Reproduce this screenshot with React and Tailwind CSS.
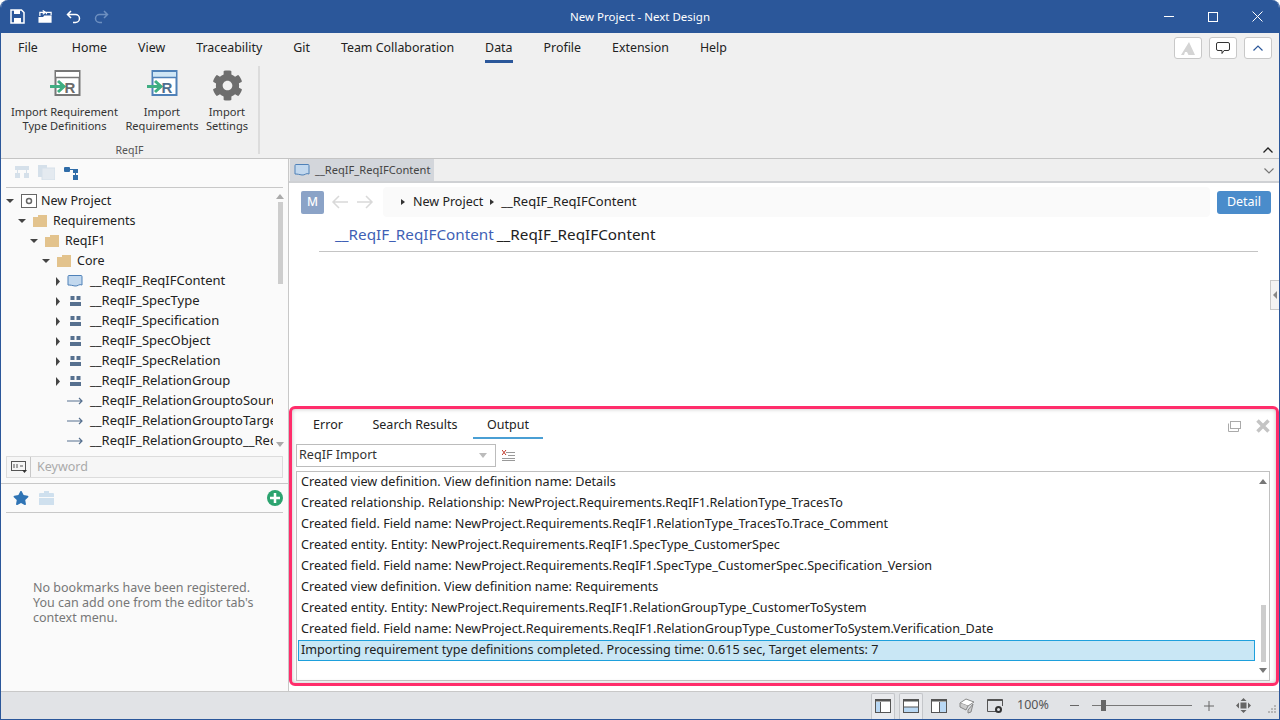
import React from "react";
import { FaCog, FaStar } from "react-icons/fa";

const ImportIcon = ({ blue }) => (
  <svg width="32" height="30" viewBox="0 0 32 30" fill="none">
    <rect x="6.500" y="1" width="24" height="24" fill="#fff" stroke={blue ? "#4f81b8" : "#777"} strokeWidth="2" />
    <rect x="7" y="2" width="23" height="5.500" fill={blue ? "#cfe6f5" : "#fff"} />
    <path d="M6 7.500h25" stroke={blue ? "#4f81b8" : "#777"} strokeWidth="1.500" />
    <text x="15.500" y="22.500" fontSize="15" fontWeight="700" fill={blue ? "#4f6f8f" : "#6b6b6b"} fontFamily="Liberation Sans, sans-serif">R</text>
    <path d="M1 16.500h12M9 11l6 5.500-6 5.500" stroke="#3fae82" strokeWidth="3" />
  </svg>
);

const Arrow = ({ open }) =>
  open ? (
    <svg width="8" height="6" viewBox="0 0 8 6"><path d="M0 1h8L4 5z" fill="#444" /></svg>
  ) : (
    <svg width="6" height="9" viewBox="0 0 6 9"><path d="M1 0l4 4.500L1 9z" fill="#444" /></svg>
  );

const Folder = () => (
  <svg width="14" height="12" viewBox="0 0 14 12"><path d="M0 2h5V0h9v12H0z" fill="#e3c38d" /></svg>
);
const Doc = () => (
  <svg width="16" height="12" viewBox="0 0 16 12" className="shrink-0"><path d="M1 1.500a1 1 0 011-1h12a1 1 0 011 1v8.500c-3-1.500-4 1.500-7 1-3-.5-4-1-7-1z" fill="#c2d8ee" stroke="#4f81b8" strokeWidth="1" /></svg>
);
const Entity = () => (
  <svg width="11" height="11" viewBox="0 0 11 11" fill="#56708f" className="ml-[3px]"><rect x="0.500" y="0" width="4" height="4" /><rect x="6.500" y="0" width="4" height="4" /><rect x="0" y="6" width="11" height="4" /></svg>
);
const Rel = () => (
  <svg width="16" height="8" viewBox="0 0 16 8" fill="none"><path d="M0 4h15M12 1l3 3-3 3" stroke="#56708f" strokeWidth="1.200" /></svg>
);
const Proj = () => (
  <svg width="16" height="14" viewBox="0 0 16 14" fill="none"><rect x="0.500" y="0.500" width="15" height="13" fill="#fff" stroke="#666" /><circle cx="8" cy="7" r="2.500" stroke="#666" strokeWidth="1.500" /></svg>
);

const treeRows = [
  { d: 0, t: "New Project", a: "open", i: <Proj /> },
  { d: 1, t: "Requirements", a: "open", i: <Folder /> },
  { d: 2, t: "ReqIF1", a: "open", i: <Folder /> },
  { d: 3, t: "Core", a: "open", i: <Folder /> },
  { d: 4, t: "__ReqIF_ReqIFContent", a: "closed", i: <Doc /> },
  { d: 4, t: "__ReqIF_SpecType", a: "closed", i: <Entity /> },
  { d: 4, t: "__ReqIF_Specification", a: "closed", i: <Entity /> },
  { d: 4, t: "__ReqIF_SpecObject", a: "closed", i: <Entity /> },
  { d: 4, t: "__ReqIF_SpecRelation", a: "closed", i: <Entity /> },
  { d: 4, t: "__ReqIF_RelationGroup", a: "closed", i: <Entity /> },
  { d: 4, t: "__ReqIF_RelationGrouptoSource", i: <Rel /> },
  { d: 4, t: "__ReqIF_RelationGrouptoTarget", i: <Rel /> },
  { d: 4, t: "__ReqIF_RelationGroupto__ReqIF", i: <Rel /> },
];

const logs = [
  "Created view definition. View definition name: Details",
  "Created relationship. Relationship: NewProject.Requirements.ReqIF1.RelationType_TracesTo",
  "Created field. Field name: NewProject.Requirements.ReqIF1.RelationType_TracesTo.Trace_Comment",
  "Created entity. Entity: NewProject.Requirements.ReqIF1.SpecType_CustomerSpec",
  "Created field. Field name: NewProject.Requirements.ReqIF1.SpecType_CustomerSpec.Specification_Version",
  "Created view definition. View definition name: Requirements",
  "Created entity. Entity: NewProject.Requirements.ReqIF1.RelationGroupType_CustomerToSystem",
  "Created field. Field name: NewProject.Requirements.ReqIF1.RelationGroupType_CustomerToSystem.Verification_Date",
];

const menus = ["File", "Home", "View", "Traceability", "Git", "Team Collaboration", "Data", "Profile", "Extension", "Help"];

const SmallBtn = ({ children }) => (
  <div className="w-[28px] h-[22px] bg-white border border-[#c8c8c8] rounded-[3px] flex items-center justify-center">{children}</div>
);

const Layout = ({ kind, active }) => (
  <div className={`w-[24px] h-[26px] flex items-center justify-center rounded-t-[2px] ${active ? "border border-[#c4c6ca] border-b-0 bg-[#e9eaed]" : ""}`}>
    <svg width="16" height="14" viewBox="0 0 16 14" fill="none">
      <rect x="0.500" y="0.500" width="15" height="13" fill="#fff" stroke="#555" />
      <path d="M0.500 0.500h15v2h-15z" fill="#555" />
      {kind === "left" && <rect x="1" y="3" width="4.500" height="10" fill="#b9d8f4" />}
      {kind === "bottom" && <rect x="1" y="8" width="14" height="5" fill="#b9d8f4" />}
      {kind === "right" && <rect x="9" y="3" width="6" height="10" fill="#b9d8f4" />}
      {kind === "left" && <path d="M5.500 3v10" stroke="#555" />}
      {kind === "bottom" && <path d="M1 8h14" stroke="#555" />}
      {kind === "right" && <path d="M8.500 3v10" stroke="#555" />}
    </svg>
  </div>
);

export default function App() {
  return (
    <div className="w-[1280px] h-[720px] flex flex-col overflow-hidden rounded-t-[8px] border-x border-b border-[#2b579a] bg-[#f0f0f0] text-[#222] font-['Noto_Sans','Open_Sans',sans-serif] text-[12px]">
      {/* Title bar */}
      <div className="h-[33px] shrink-0 bg-[#2b579a] grid grid-cols-[1fr_auto_1fr] items-center text-white">
        <div className="flex items-center gap-[13px] pl-[9px]">
          <svg width="15" height="15" viewBox="0 0 15 15" fill="none"><path d="M1 1h10.500L14 3.500V14H1z" stroke="#fff" strokeWidth="1.500" /><rect x="4" y="1" width="6" height="4" fill="#fff" /><rect x="4" y="9" width="7" height="5" fill="#fff" /></svg>
          <svg width="15" height="14" viewBox="0 0 16 14" fill="none"><path d="M0.500 7h5l1-1.500h8V13H.500z" fill="#fff" /><path d="M2 6V2h5M5 0l3 2-3 2M9 4V2h5v3" stroke="#fff" strokeWidth="1.300" /></svg>
          <svg width="15" height="14" viewBox="0 0 15 14" fill="none"><path d="M5 1L1.500 4.500 5 8M2 4.500h7.500a4 4 0 010 8H7" stroke="#fff" strokeWidth="1.500" /></svg>
          <svg width="15" height="14" viewBox="0 0 15 14" fill="none"><path d="M10 1l3.500 3.500L10 8M13 4.500H5.500a4 4 0 000 8H8" stroke="#6d8fc0" strokeWidth="1.500" /></svg>
        </div>
        <div className="text-[11.500px] text-white pt-[1px]">New Project - Next Design</div>
        <div className="flex items-center justify-end pr-[16px] gap-[34px]">
          <div className="w-[10px] h-px bg-white" />
          <div className="w-[10px] h-[10px] border border-white" />
          <svg width="11" height="11" viewBox="0 0 11 11"><path d="M0.500 0.500l10 10M10.500 0.500l-10 10" stroke="#fff" /></svg>
        </div>
      </div>

      {/* Menu */}
      <div className="h-[33px] shrink-0 flex items-start justify-between pl-[1px] pr-[7px]">
        <div className="flex items-start">
          {menus.map((m) => (
            <div key={m} className={`mx-[15.500px] flex items-center text-[12.400px] ${m === "File" ? "ml-[16px] mr-[18.500px]" : ""} ${m === "Data" ? "h-[30px] border-b-[3px] border-[#2b579a] pt-[3px]" : "h-[30px]"}`}>{m}</div>
          ))}
        </div>
        <div className="flex items-center gap-[7px] pt-[4px]">
          <SmallBtn><svg width="16" height="13" viewBox="0 0 16 13"><path d="M9 0l6 13H8.500L7 10H5l-1 3H1z" fill="#d4d4d4" /></svg></SmallBtn>
          <SmallBtn><svg width="14" height="13" viewBox="0 0 14 13" fill="none"><path d="M2 .500h10a1.500 1.500 0 011.500 1.500v5a1.500 1.500 0 01-1.500 1.500H8L6 11.500V8.500H2A1.500 1.500 0 01.500 7V2A1.500 1.500 0 012 .500z" stroke="#333" /></svg></SmallBtn>
          <SmallBtn><svg width="10" height="6" viewBox="0 0 10 6" fill="none"><path d="M.500 5.500L5 1l4.500 4.500" stroke="#2b579a" strokeWidth="1.200" /></svg></SmallBtn>
        </div>
      </div>

      {/* Ribbon */}
      <div className="h-[93px] shrink-0 border-b border-[#c4c4c4] flex justify-between pr-[6px]">
        <div className="flex h-[88px]">
          <div className="w-[259px] flex flex-col border-r-2 border-[#dcdcdc]">
            <div className="flex pt-[4px] h-[72px] text-[11.100px] leading-[14px] text-center text-[#333]">
              <div className="w-[113px] ml-[7px] flex flex-col items-center">
                <div className="h-[32px]"><ImportIcon /></div>
                <div className="mt-[3px] whitespace-nowrap">Import Requirement<br />Type Definitions</div>
              </div>
              <div className="w-[80px] ml-[1px] flex flex-col items-center">
                <div className="h-[32px]"><ImportIcon blue /></div>
                <div className="mt-[3px] whitespace-nowrap">Import<br />Requirements</div>
              </div>
              <div className="w-[50px] flex flex-col items-center">
                <div className="h-[32px]"><FaCog size={31} color="#6e6e6e" /></div>
                <div className="mt-[3px] whitespace-nowrap">Import<br />Settings</div>
              </div>
            </div>
            <div className="text-center text-[10.500px] text-[#555] mt-[10px]">ReqIF</div>
          </div>
        </div>
        <div className="flex items-end pb-[5px]">
          <svg width="10" height="6" viewBox="0 0 10 6" fill="none"><path d="M.500 5.500L5 1l4.500 4.500" stroke="#222" strokeWidth="1.300" /></svg>
        </div>
      </div>

      {/* Body */}
      <div className="flex-1 min-h-0 flex">
        {/* Left */}
        <div className="w-[288px] shrink-0 bg-[#fafafa] border-r border-[#c8c8c8] flex flex-col">
          <div className="h-[29px] shrink-0 mx-[5px] border-b-[1.500px] border-[#c8c8c8] flex items-center gap-[9px] pl-[9px] pb-[1px]">
            <svg width="14" height="13" viewBox="0 0 14 13" fill="#d5e0ea"><rect x="0" y="0" width="14" height="4" /><rect x="0" y="7" width="5" height="5" /><rect x="9" y="7" width="5" height="5" /><path d="M2 3h1v5H2zM11 3h1v5h-1z" /></svg>
            <svg width="17" height="15" viewBox="0 0 17 15" fill="#d5e0ea"><rect x="0" y="0" width="9" height="12" /><rect x="4" y="3" width="13" height="12" fill="#e4eaf0" stroke="#d5e0ea" /></svg>
            <svg width="15" height="14" viewBox="0 0 15 14" fill="#2f6ca8"><rect x="0" y="1" width="6" height="5" rx="1" /><rect x="9" y="3" width="5" height="4" /><rect x="9" y="9" width="5" height="5" /><path d="M5 3h6v1H5zM11 6h1v4h-1z" /></svg>
          </div>
          <div className="flex-1 min-h-0 flex">
            <div className="w-[272px] pl-[1px] pt-[3px] overflow-hidden">
              {treeRows.map((r) => (
                <div key={r.t} className="h-[20px] flex items-center whitespace-nowrap" style={{ paddingLeft: r.d * 12 + 3 }}>
                  <span className="w-[10px] flex items-center justify-center shrink-0">
                    {r.a && <Arrow open={r.a === "open"} />}
                  </span>
                  {r.d === 4 ? (
                    <span className="w-[16px] ml-[4px] mr-[7px] flex items-center shrink-0">{r.i}</span>
                  ) : (
                    <span className="w-[18px] ml-[6px] mr-[2px] flex items-center shrink-0">{r.i}</span>
                  )}
                  <span className={`${r.d === 4 ? "text-[13px]" : "text-[12.500px]"} text-[#222]`}>{r.t}</span>
                </div>
              ))}
            </div>
            <div className="w-[14px] flex flex-col items-center pt-[6px] relative">
              <svg width="8" height="5" viewBox="0 0 8 5"><path d="M4 0l4 5H0z" fill="#aaa" /></svg>
              <div className="w-[5px] h-[82px] bg-[#cdcdcd] mt-[3px]" />
              <div className="flex-1" />
              <svg width="8" height="5" viewBox="0 0 8 5" className="mb-[4px]"><path d="M0 0h8L4 5z" fill="#aaa" /></svg>
            </div>
          </div>
          <div className="h-[22px] shrink-0 mx-[5px] mb-[5px] mt-[5px] border border-[#dcdcdc] flex items-center bg-[#f6f6f6]">
            <div className="w-[24px] h-full border-r border-[#c8c8c8] flex items-center justify-center">
              <svg width="16" height="12" viewBox="0 0 16 12" fill="none"><rect x=".500" y=".500" width="14" height="9" stroke="#555" /><path d="M3 3v4M6 3v4M9 5h3" stroke="#555" /><path d="M11 9h5l-2.500 3z" fill="#333" /></svg>
            </div>
            <span className="pl-[6px] pt-[1px] text-[12.500px] text-[#aaa]">Keyword</span>
          </div>
          <div className="h-px shrink-0 bg-[#c8c8c8]" />
          <div className="h-[29px] shrink-0 mx-[5px] border-b-[1.500px] border-[#c8c8c8] flex items-center justify-between pl-[7px]">
            <div className="flex items-center gap-[10px]">
              <FaStar size={16} color="#2f74b5" />
              <svg width="15" height="14" viewBox="0 0 15 14" fill="#cfe0ee"><path d="M5 0h5v2h4a1 1 0 011 1v3H0V3a1 1 0 011-1h4z" /><rect x="0" y="7" width="15" height="7" /></svg>
            </div>
            <div className="w-[16px] h-[16px] rounded-full bg-[#2ca36f] flex items-center justify-center">
              <svg width="10" height="10" viewBox="0 0 10 10"><path d="M5 0v10M0 5h10" stroke="#fff" strokeWidth="2.500" /></svg>
            </div>
          </div>
          <div className="h-[178px] shrink-0 flex flex-col justify-end pb-[66px] pl-[32px] text-[12.500px] leading-[15px] text-[#777]">
            <div>No bookmarks have been registered.</div>
            <div>You can add one from the editor tab's</div>
            <div>context menu.</div>
          </div>
        </div>

        {/* Right */}
        <div className="flex-1 min-w-0 flex flex-col bg-white">
          <div className="h-[24px] shrink-0 bg-[#efefef] border-b-[2px] border-[#cfd1d4] flex items-start justify-between pl-[1px] pr-[5px]">
            <div className="w-[144px] h-[22px] bg-[#d3d6db] flex items-center pl-[4px] gap-[5px] text-[11.100px] text-[#444] whitespace-nowrap">
              <Doc />
              <span>__ReqIF_ReqIFContent</span>
            </div>
            <svg width="10" height="6" viewBox="0 0 10 6" fill="none" className="mt-[9px]"><path d="M.500.500L5 5l4.500-4.500" stroke="#777" strokeWidth="1.200" /></svg>
          </div>
          <div className="h-[223px] shrink-0 relative">
            <div className="flex items-center pt-[4px] pl-[12px] pr-[8px] h-[34px]">
              <div className="w-[23px] h-[23px] rounded-[2px] bg-[#8ba3c7] flex items-center justify-center text-white text-[12px] font-medium">M</div>
              <div className="flex items-center gap-[7px] ml-[7px]">
                <svg width="18" height="14" viewBox="0 0 18 14" fill="none"><path d="M17 7H2M8 1L2 7l6 6" stroke="#d9d9d9" strokeWidth="1.500" /></svg>
                <svg width="18" height="14" viewBox="0 0 18 14" fill="none"><path d="M1 7h15M10 1l6 6-6 6" stroke="#d9d9d9" strokeWidth="1.500" /></svg>
              </div>
              <div className="flex-1 h-[30px] ml-[9px] bg-[#fafafa] rounded-[4px] flex items-center pl-[18px] text-[12.500px] text-[#222]">
                <svg width="4" height="6" viewBox="0 0 4 6" className="mr-[8px]"><path d="M0 0l4 3-4 3z" fill="#333" /></svg>
                <span>New Project</span>
                <svg width="4" height="6" viewBox="0 0 4 6" className="mx-[7px]"><path d="M0 0l4 3-4 3z" fill="#333" /></svg>
                <span className="text-[13px]">__ReqIF_ReqIFContent</span>
              </div>
              <div className="ml-[7px] w-[54px] h-[23px] rounded-[3px] bg-[#4a8ccb] text-white text-[12.500px] flex items-center justify-center">Detail</div>
            </div>
            <div className="ml-[30px] mr-[21px] mt-[8px] h-[27px] border-b border-[#c4c4c4] pl-[16px] text-[15.250px] leading-[19px] whitespace-nowrap">
              <span className="text-[#3f5fb5]">__ReqIF_ReqIFContent</span>
              <span className="ml-[3px] text-[#222]">__ReqIF_ReqIFContent</span>
            </div>
            <div className="absolute right-0 top-[97px] w-[9px] h-[30px] bg-[#f3f3f3] border border-r-0 border-[#c8c8c8] flex items-center justify-center">
              <svg width="4" height="8" viewBox="0 0 4 8"><path d="M4 0v8L0 4z" fill="#888" /></svg>
            </div>
          </div>
          {/* Output pane */}
          <div className="flex-1 min-h-0 border-[3px] border-[#ff2d6b] rounded-[6px] mb-[5px] shadow-[inset_0_0_4px_rgba(0,0,0,0.25)] bg-white flex flex-col">
            <div className="h-[30px] shrink-0 flex items-end justify-between pl-[6px] pr-[6px]">
              <div className="flex items-end text-[12.500px] text-[#222]">
                <div className="w-[60px] h-[27px] flex items-center justify-center">Error</div>
                <div className="w-[114px] h-[27px] flex items-center justify-center">Search Results</div>
                <div className="w-[70px] h-[27px] flex items-center justify-center border-b-[2px] border-[#4a9fd4] ml-[1px] pt-[2px]">Output</div>
              </div>
              <div className="flex items-center gap-[15px] pb-[6px]">
                <svg width="13" height="11" viewBox="0 0 13 11" fill="none"><rect x="2.500" y=".500" width="10" height="7" stroke="#aaa" /><path d="M.500 2.500V10.500h10V8" stroke="#aaa" /></svg>
                <svg width="14" height="14" viewBox="0 0 14 14"><path d="M1.500 1.500l11 11M12.500 1.500l-11 11" stroke="#c4c4c4" strokeWidth="3.500" /></svg>
              </div>
            </div>
            <div className="h-[28px] shrink-0 flex items-center pl-[4px] pt-[4px]">
              <div className="w-[200px] h-[23px] border border-[#bcbcbc] flex items-center justify-between pl-[2px] pr-[2px] text-[12.600px] text-[#333]">
                <span>ReqIF Import</span>
                <svg width="8" height="5" viewBox="0 0 8 5" className="mr-[6px]"><path d="M0 0h8L4 5z" fill="#bbb" /></svg>
              </div>
              <svg width="13" height="11" viewBox="0 0 13 11" fill="none" className="ml-[6px]"><path d="M4 2.500h9M6 5.500h7M0 8.500h13M0 10.500h13" stroke="#999" /><path d="M0 0l4 5M4 0L0 5" stroke="#c0392b" /></svg>
            </div>
            <div className="ml-[4px] mr-[6px] mb-[2px] mt-[4px] flex-1 min-h-0 border border-[#c0c0c0] flex">
              <div className="flex-1 min-w-0 pl-[1px]">
                {logs.map((l) => (
                  <div key={l} className="h-[21px] pl-[3px] flex items-center text-[12.620px] text-[#222] whitespace-nowrap">{l}</div>
                ))}
                <div className="h-[21px] pl-[2px] flex items-center text-[12.620px] text-[#222] bg-[#c9e7f5] border border-[#1ea0dc] whitespace-nowrap">Importing requirement type definitions completed. Processing time: 0.615 sec, Target elements: 7</div>
              </div>
              <div className="w-[14px] flex flex-col items-center pt-[7px] pb-[7px] pl-[2px]">
                <svg width="8" height="5" viewBox="0 0 8 5"><path d="M4 0l4 5H0z" fill="#777" /></svg>
                <div className="flex-1" />
                <div className="w-[5px] h-[57px] bg-[#cdcdcd] mb-[6px]" />
                <svg width="8" height="5" viewBox="0 0 8 5"><path d="M0 0h8L4 5z" fill="#777" /></svg>
              </div>
            </div>
          </div>
        </div>
      </div>

      {/* Status bar */}
      <div className="h-[28px] shrink-0 bg-[#e1e3e6] border-t border-[#c8c8c8] flex items-end justify-end text-[#555] pr-[2px]">
        <div className="flex items-center h-[27px] gap-[4px]">
          <Layout kind="left" active />
          <Layout kind="bottom" active />
          <Layout kind="right" />
          <div className="w-[24px] flex justify-center">
            <svg width="16" height="16" viewBox="0 0 16 16" fill="none"><path d="M1 5l6-4 8 3-6 4z" fill="#fff" stroke="#888" /><path d="M1 5v4l6 3 2-4M9 12l5-6-2 8-3 1z" stroke="#888" fill="#ccc" /></svg>
          </div>
          <div className="w-[24px] flex justify-center">
            <svg width="16" height="14" viewBox="0 0 16 14" fill="none"><path d="M9 12.500H.500V.500h15V7" stroke="#555" /><path d="M.500 .500h15v1.500h-15z" fill="#555" /><circle cx="11.500" cy="10.500" r="2.500" stroke="#333" strokeWidth="2" /></svg>
          </div>
          <span className="ml-[6px] w-[34px] text-[12.500px] text-[#555]">100%</span>
          <span className="ml-[15px] w-[9px] h-px bg-[#666]" />
          <div className="ml-[9px] w-[100px] h-px bg-[#777] relative">
            <div className="absolute left-[9px] -top-[5px] w-[5px] h-[11px] bg-[#666]" />
          </div>
          <svg width="10" height="10" viewBox="0 0 10 10" className="ml-[8px]"><path d="M5 0v10M0 5h10" stroke="#666" /></svg>
          <svg width="15" height="15" viewBox="0 0 15 15" fill="#666" className="ml-[18px]"><path d="M7.500 0l3 3h-6zM7.500 15l-3-3h6zM0 7.500l3-3v6zM15 7.500l-3 3v-6z" /><rect x="4.500" y="4.500" width="6" height="6" /></svg>
          <svg width="10" height="10" viewBox="0 0 10 10" fill="#b5b5b5" className="ml-[12px] mt-[8px]"><rect x="7" y="0" width="2" height="2" /><rect x="4" y="3" width="2" height="2" /><rect x="7" y="3" width="2" height="2" /><rect x="1" y="6" width="2" height="2" /><rect x="4" y="6" width="2" height="2" /><rect x="7" y="6" width="2" height="2" /></svg>
        </div>
      </div>
    </div>
  );
}
